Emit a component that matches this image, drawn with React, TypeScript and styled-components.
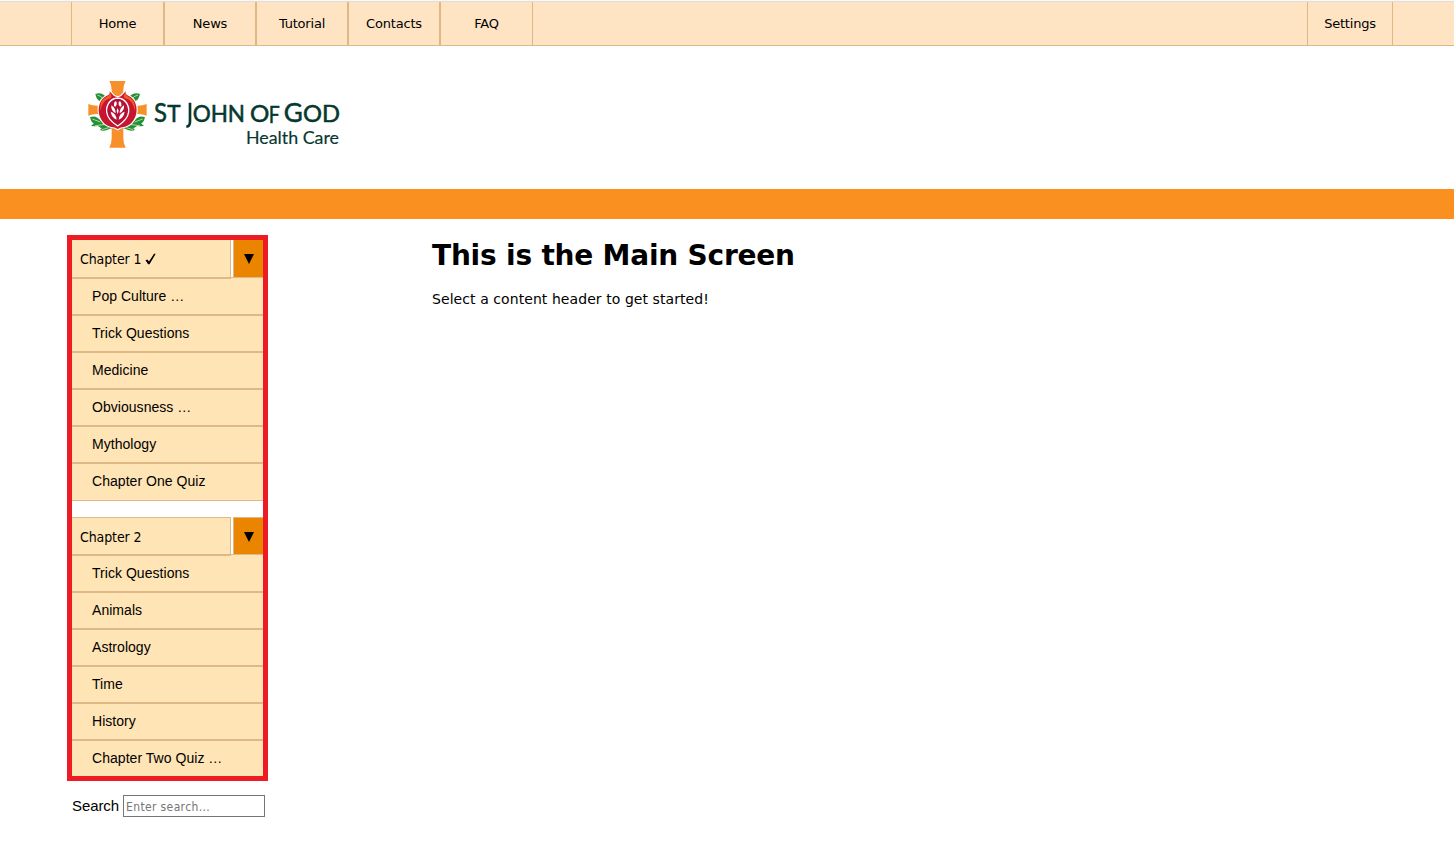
import React from "react";
import styled, { createGlobalStyle } from "styled-components";

const verdana = `Verdana, "DejaVu Sans", sans-serif`;
const arial = `Arial, "Liberation Sans", sans-serif`;
const tahoma = `Tahoma, "DejaVu Sans Condensed", "DejaVu Sans", sans-serif`;
const line = "#deb887";

const GlobalStyle = createGlobalStyle`
  * { box-sizing: border-box; }
  body { margin: 0; background: #fff; color: #000; font-family: ${verdana}; }
`;

const TopBar = styled.nav`
  display: flex;
  height: 46px;
  padding: 0 61px 0 71px;
  background: #ffe4c4;
  border-top: 1px solid #f8f8f8;
  border-bottom: 1px solid ${line};
  box-shadow: inset 0 1px #e3ddd6;
`;

const NavItem = styled.a<{ $width: number; $end?: boolean }>`
  display: flex;
  align-items: center;
  justify-content: center;
  width: ${(p) => p.$width}px;
  margin-top: 1px;
  margin-left: ${(p) => (p.$end ? "auto" : "0")};
  border-left: 1px solid ${line};
  border-right: 1px solid ${line};
  font-size: 13px;
  letter-spacing: -0.2px;
`;

const Header = styled.header`
  height: 143px;
  padding: 29px 0 0 80px;
`;

const Band = styled.div`
  height: 30px;
  background: #f99020;
`;

const Page = styled.div`
  display: flex;
  align-items: flex-start;
  padding: 16px 0 0 67px;
`;

const Side = styled.aside`
  width: 201px;
`;

const Menu = styled.div`
  height: 546px;
  border: 5px solid #ed1c24;
  overflow: hidden;
`;

const Chapter = styled.section`
  & + & { margin-top: 16px; }
`;

const ChapterRow = styled.div<{ $topLine?: boolean }>`
  display: flex;
  gap: 2px;
  height: 37px;
  > * { border-top: ${(p) => (p.$topLine ? `1px solid ${line}` : "0")}; }
`;

const ChapterTitle = styled.div`
  display: flex;
  align-items: center;
  position: relative;
  z-index: 1;
  width: 159px;
  flex: none;
  height: 39px;
  padding: 1px 0 0 8px;
  background: #ffe4b5;
  border-right: 1px solid ${line};
  border-bottom: 2px solid ${line};
  font-family: ${tahoma};
  font-size: 14px;
  letter-spacing: -0.1px;
  white-space: pre;
`;

const Toggle = styled.button<{ $topLine?: boolean }>`
  display: flex;
  align-items: center;
  justify-content: center;
  width: 30px;
  padding: ${(p) => (p.$topLine ? "1px" : "0")} 0 0;
  border: 0 solid ${line};
  border-width: ${(p) => (p.$topLine ? "1px" : "0")} 0 0 1px;
  background: #eb8500;
`;

const Item = styled.a`
  display: block;
  height: 37px;
  padding-left: 20px;
  background: #ffe4b5;
  border-top: 1px solid ${line};
  border-bottom: 1px solid ${line};
  font: 14px/35px ${arial};
  letter-spacing: 0.04px;
  &:first-of-type { height: 38px; line-height: 36px; }
  &:last-of-type { height: 38px; }
`;

const Search = styled.label`
  display: flex;
  align-items: center;
  gap: 4px;
  margin: 14px 0 0 5px;
  font: 15px/20px ${arial};
  letter-spacing: -0.1px;
`;

const SearchText = styled.span`
  width: 47px;
`;

const SearchInput = styled.input`
  width: 142px;
  height: 22px;
  padding: 2px 2px 0;
  border: 1px solid #767676;
  font: 12px ${tahoma};
  letter-spacing: 0.37px;
  &::placeholder { color: #767676; }
`;

const Main = styled.main`
  margin-left: 164px;
`;

const Title = styled.h1`
  margin: 3px 0 0;
  font-size: 28px;
  line-height: 35px;
  letter-spacing: -0.21px;
  white-space: nowrap;
`;

const Lead = styled.p`
  margin: 16px 0 0;
  font-size: 14px;
  line-height: 20px;
  letter-spacing: 0.07px;
  white-space: nowrap;
`;

const Logo = () => (
  <svg width="270" height="80" viewBox="0 0 810 240" role="img" aria-label="St John of God Health Care">
    <g fill="#f7902a">
      <path d="M88 18H137Q130 30 130 44V100H95V44Q95 30 88 18Z" />
      <path d="M95 140H130V190Q130 206 137 218H88Q95 206 95 190Z" />
      <path d="M25 87Q37 92 50 92H75V117H50Q37 117 25 122Z" />
      <path d="M200 87Q188 92 175 92H150V117H175Q188 117 200 122Z" />
    </g>
    <g fill="#23903c">
      <path d="M46 57Q66 50 78 67L74 82Q51 83 46 57Z" />
      <path d="M180 57Q160 50 147 67L151 82Q175 83 180 57Z" />
      <path d="M30 127Q47 119 61 136L70 147Q36 157 30 127Z" />
      <path d="M195 127Q178 119 164 136L155 147Q189 157 195 127Z" />
      <path d="M33 153Q48 136 68 137Q88 140 92 157Q70 168 54 153Q47 154 33 153Z" />
      <path d="M192 153Q177 136 157 137Q137 140 133 157Q155 168 171 153Q178 154 192 153Z" />
      <path d="M60 165Q70 151 84 154Q94 153 101 158Q88 160 81 165Q70 170 60 165Z" />
      <path d="M165 165Q155 151 141 154Q131 153 124 158Q137 160 144 165Q155 170 165 165Z" />
    </g>
    <g fill="none" stroke="#b4d982" strokeWidth="3">
      <path d="M52 60Q66 62 71 76M174 60Q160 62 155 76M37 132L61 141M188 132L164 141M45 152L78 148M180 152L147 148M66 164L86 158M159 164L139 158" />
    </g>
    <path d="M89 49C94 62 74 61 65 75C46 103 59 146 91 155Q105 156 113 162Q121 156 135 155C167 146 180 103 161 75C152 61 132 62 137 49L124 63Q114 70 102 63Z" fill="#c9152f" stroke="#fff" strokeWidth="7" paintOrder="stroke" />
    <path d="M89 49C94 65 72 64 64 80Q59 94 61 108Q68 73 91 70Q99 68 89 49ZM137 49C132 65 154 64 162 80Q167 94 165 108Q158 73 135 70Q127 68 137 49Z" fill="#f05a28" />
    <path d="M113 69C91 70 78 90 80 111Q83 134 113 153Q143 134 146 111C148 90 135 70 113 69Z" fill="#b51035" stroke="#fff" strokeWidth="4" />
    <g fill="#fff">
      <ellipse cx="106" cy="87" rx="4" ry="8" transform="rotate(12 106 87)" />
      <ellipse cx="120" cy="87" rx="4" ry="8" transform="rotate(-12 120 87)" />
      <path d="M94 91Q107 99 107 115Q92 106 94 91ZM132 91Q119 99 119 115Q134 106 132 91ZM92 110Q108 114 110 134Q95 128 92 110ZM134 110Q118 114 116 134Q131 128 134 110ZM113 99L116 108L113 117L110 108Z" />
    </g>
    <g fill="#06382f" stroke="#06382f" strokeWidth="1.6" fontFamily="Lato, sans-serif">
      <text y="141" x="222" fontSize="80" textLength="39" lengthAdjust="spacingAndGlyphs">S</text>
      <text y="141" x="262" fontSize="68" textLength="40" lengthAdjust="spacingAndGlyphs">T</text>
      <path d="M330 83V140Q330 154 319 155" fill="none" strokeWidth="8" />
      <text y="141" fontSize="68" x="338" textLength="157" lengthAdjust="spacingAndGlyphs">OHN</text>
      <text y="141" fontSize="68" x="510" textLength="58" lengthAdjust="spacingAndGlyphs">O</text>
      <text y="145" fontSize="72" x="566" textLength="33" lengthAdjust="spacingAndGlyphs">F</text>
      <text y="141" fontSize="80" x="611" textLength="57" lengthAdjust="spacingAndGlyphs">G</text>
      <text y="141" fontSize="68" x="669" textLength="111" lengthAdjust="spacingAndGlyphs">OD</text>
      <text y="206" fontSize="53" x="498" textLength="279" lengthAdjust="spacingAndGlyphs" strokeWidth="0.5">Health Care</text>
    </g>
  </svg>
);

const Arrow = () => (
  <svg width="10" height="10" viewBox="0 0 10 10">
    <path d="M0 0H10L5 10Z" />
  </svg>
);

const Check = () => (
  <svg width="11" height="12" viewBox="0 0 11 12">
    <path d="M0.5 7.2L2.4 6.4L4 8.6L9 0.8L10.7 0.8L4.5 11.3H3.1Z" />
  </svg>
);

const nav = [
  { label: "Home", width: 93 },
  { label: "News", width: 92 },
  { label: "Tutorial", width: 92 },
  { label: "Contacts", width: 92 },
  { label: "FAQ", width: 93 },
];

const chapters = [
  {
    title: "Chapter 1",
    done: true,
    items: ["Pop Culture …", "Trick Questions", "Medicine", "Obviousness …", "Mythology", "Chapter One Quiz"],
  },
  {
    title: "Chapter 2",
    done: false,
    items: ["Trick Questions", "Animals", "Astrology", "Time", "History", "Chapter Two Quiz …"],
  },
];

export default function App() {
  return (
    <>
      <GlobalStyle />
      <TopBar>
        {nav.map((n) => (
          <NavItem key={n.label} $width={n.width}>{n.label}</NavItem>
        ))}
        <NavItem $width={86} $end>Settings</NavItem>
      </TopBar>
      <Header><Logo /></Header>
      <Band />
      <Page>
        <Side>
          <Menu>
            {chapters.map((c, i) => (
              <Chapter key={c.title}>
                <ChapterRow $topLine={i > 0}>
                  <ChapterTitle>{c.title} {c.done && <Check />}</ChapterTitle>
                  <Toggle $topLine={i > 0} aria-label="Toggle chapter"><Arrow /></Toggle>
                </ChapterRow>
                {c.items.map((t) => <Item key={t}>{t}</Item>)}
              </Chapter>
            ))}
          </Menu>
          <Search>
            <SearchText>Search</SearchText>
            <SearchInput placeholder="Enter search..." />
          </Search>
        </Side>
        <Main>
          <Title>This is the Main Screen</Title>
          <Lead>Select a content header to get started!</Lead>
        </Main>
      </Page>
    </>
  );
}
